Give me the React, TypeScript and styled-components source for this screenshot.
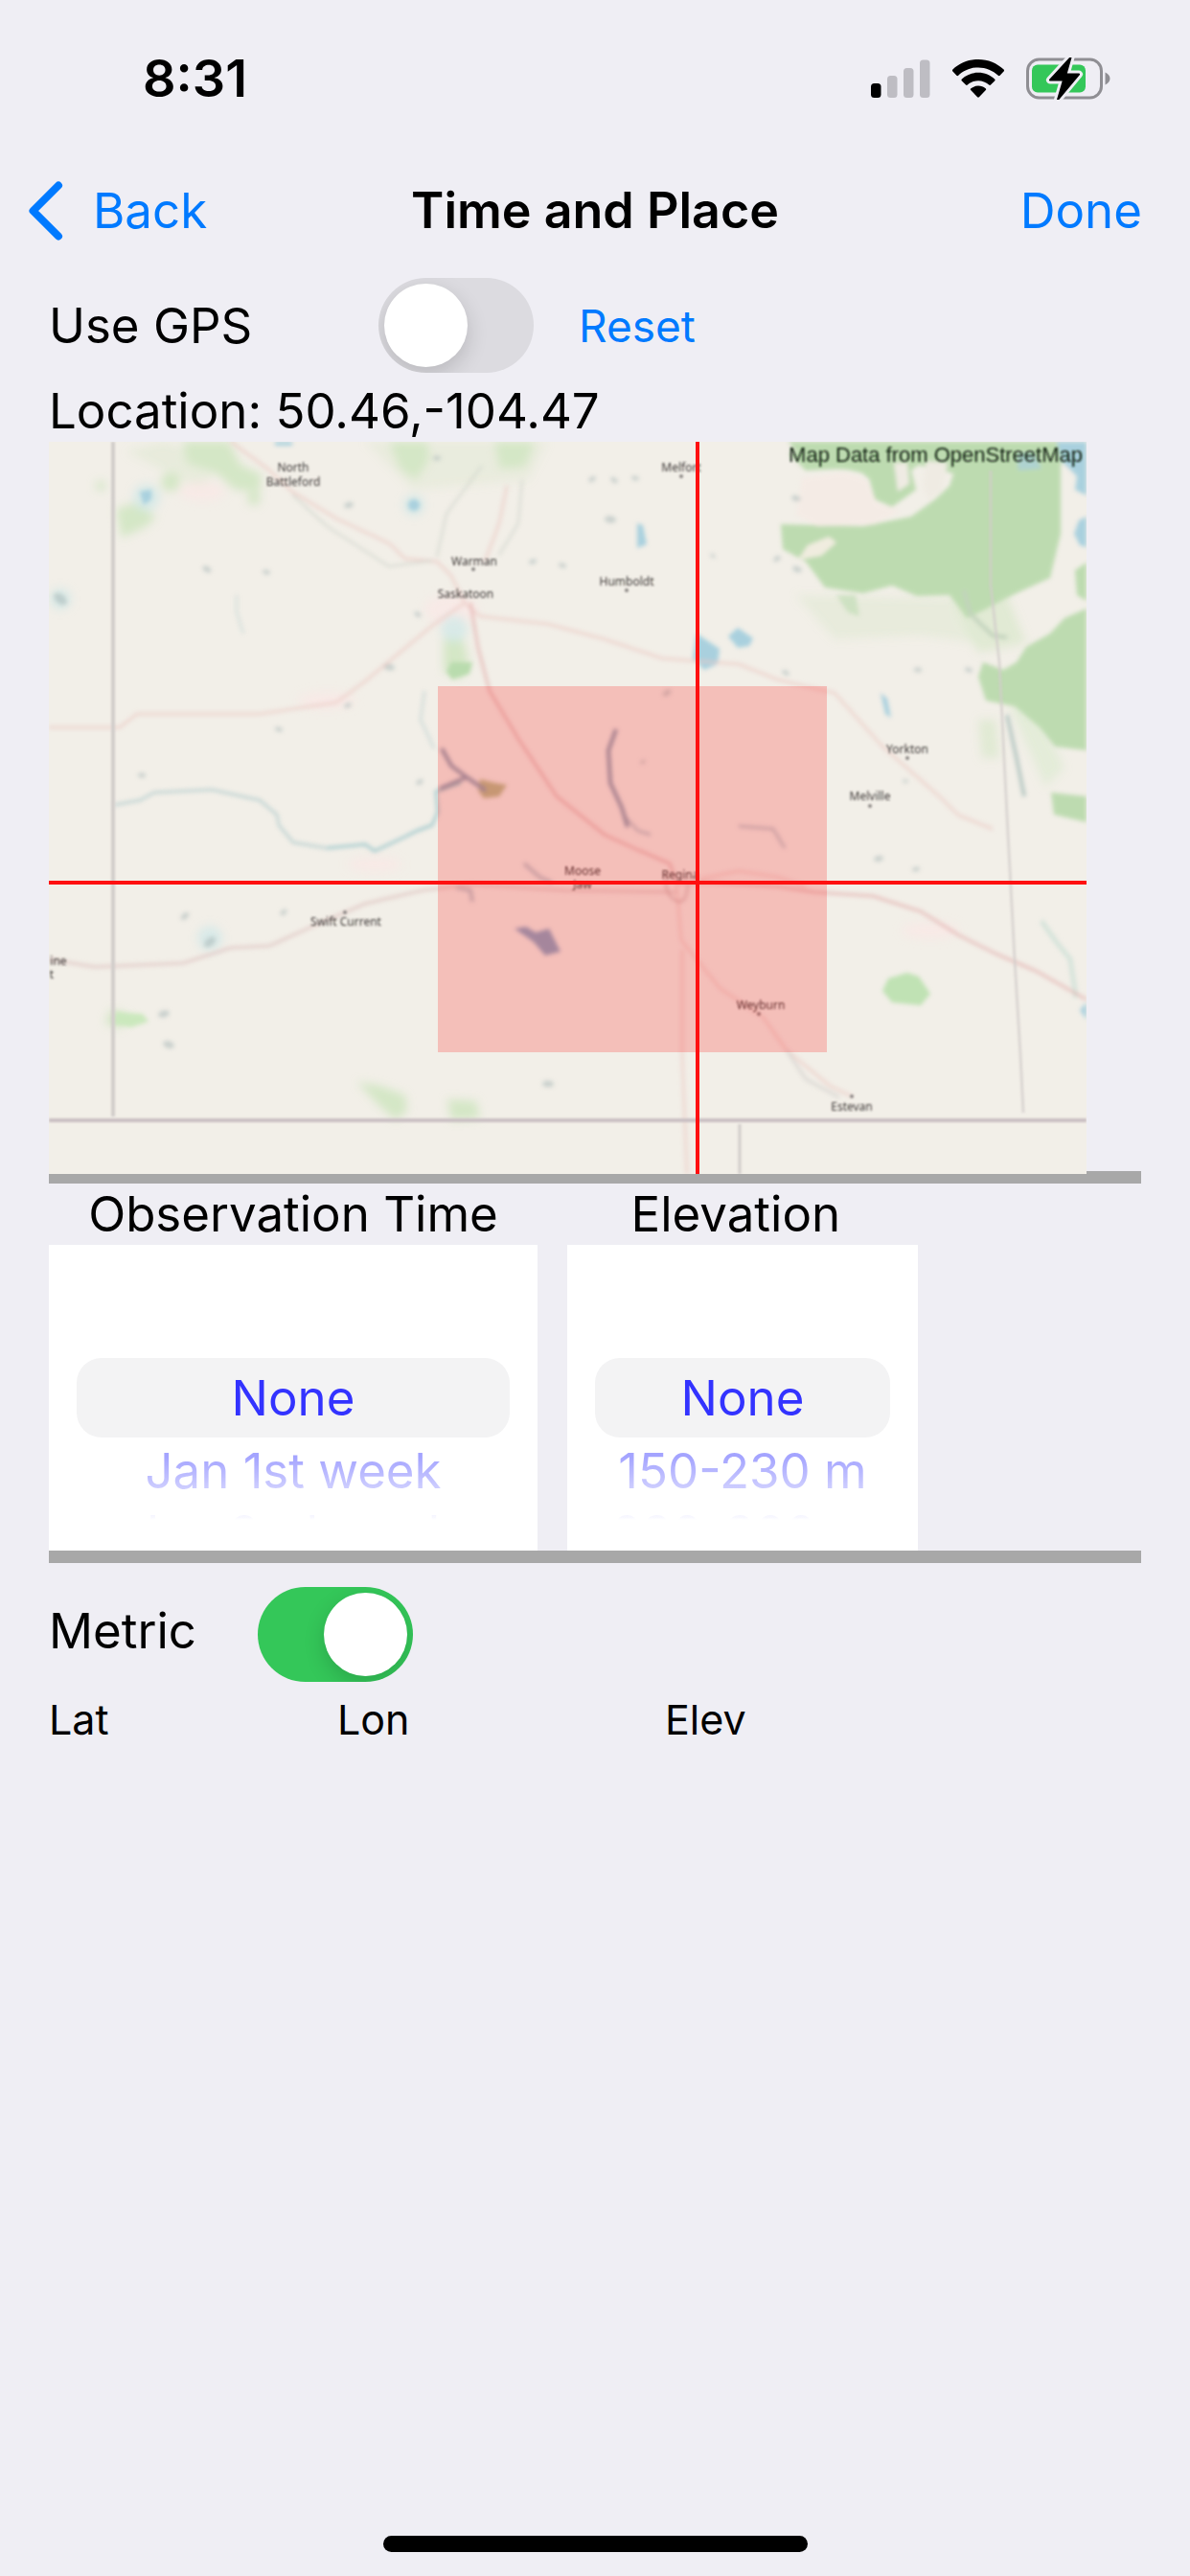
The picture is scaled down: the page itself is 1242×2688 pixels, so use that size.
import React, { useState } from "react";
import styled, { createGlobalStyle, css } from "styled-components";

const color = {
  page: "#efeef4",
  ink: "#000000",
  link: "#007aff",
  rule: "#a8a8a8",
  switchOff: "#dcdbe0",
  switchOn: "#34c759",
  wheel: "#3333ff",
  wheelBand: "#f3f3f4",
};

const GlobalStyle = createGlobalStyle`
  *, *::before, *::after { box-sizing: border-box; }
  body {
    margin: 0;
    background: ${color.page};
    color: ${color.ink};
    font-family: Inter, "Liberation Sans", sans-serif;
    font-size: 51px;
    line-height: 64px;
  }
  button, input { font: inherit; }
`;

const Screen = styled.div`
  display: flex;
  flex-direction: column;
  min-height: 100vh;
`;

const StatusBar = styled.header`
  display: flex;
  justify-content: space-between;
  align-items: center;
  height: 164px;
  padding: 0 83px 0 149px;
`;

const Clock = styled.time`
  font-size: 54px;
  font-weight: 600;
`;

const StatusIcons = styled.div`
  display: flex;
  align-items: center;
  gap: 23px;

  svg { display: block; }
`;

const NavBar = styled.nav`
  display: grid;
  grid-template-columns: 1fr auto 1fr;
  align-items: center;
  height: 112px;
  padding: 0 30px;
  column-gap: 10px;
`;

const Title = styled.h1`
  margin: 0;
  font-size: 52px;
  font-weight: 600;
  white-space: nowrap;
`;

const TextButton = styled.button<{ $small?: boolean }>`
  display: flex;
  align-items: center;
  padding: 0;
  border: 0;
  background: none;
  color: ${color.link};
  cursor: pointer;
  ${(p) => p.$small && css`font-size: 46px;`}
`;

const BackButton = styled(TextButton)`
  justify-self: start;
  gap: 31px;
`;

const DoneButton = styled(TextButton)`
  justify-self: end;
  padding-right: 20px;
`;

const Content = styled.main`
  display: flex;
  flex-direction: column;
  padding: 14px 51px 0;
`;

const GpsRow = styled.div`
  display: grid;
  grid-template-columns: 344px auto 1fr;
  align-items: center;
`;

const MetricRow = styled.div`
  display: grid;
  grid-template-columns: 218px auto;
  align-items: start;
  justify-content: start;
  margin-top: 25px;
  line-height: 92px;
`;

const ResetSlot = styled.div`
  padding-left: 47px;
`;

const Switch = styled.input`
  appearance: none;
  display: block;
  width: 162px;
  height: 99px;
  margin: 0;
  padding: 6px;
  border-radius: 50px;
  background: ${color.switchOff};
  overflow: hidden;
  cursor: pointer;

  &::before {
    content: "";
    display: block;
    width: 87px;
    height: 87px;
    border-radius: 50%;
    background: #ffffff;
    box-shadow: 0 8px 22px rgba(0, 0, 0, 0.16);
  }

  &:checked { background: ${color.switchOn}; }
  &:checked::before { margin-left: auto; }
`;

const Location = styled.p`
  margin: 8px 0 0;
`;

const MapFrame = styled.figure`
  position: relative;
  z-index: 1;
  width: 95%;
  margin: 0 0 -3px;

  svg {
    display: block;
    width: 100%;
    height: auto;
  }
`;

const Rule = styled.hr`
  width: 100%;
  height: 13px;
  margin: 0;
  border: 0;
  background: ${color.rule};
`;

const Pickers = styled.div`
  display: flex;
  gap: 31px;
`;

const PickerColumn = styled.section<{ $width: number }>`
  width: ${(p) => p.$width}px;
`;

const PickerHeading = styled.h2`
  margin: 0;
  font-size: inherit;
  font-weight: 400;
  text-align: center;
  white-space: pre;
`;

const Wheel = styled.fieldset`
  display: flex;
  flex-direction: column;
  height: 319px;
  min-width: 0;
  margin: 0;
  padding: 118px 29px 0;
  border: 0;
  background: #ffffff;
`;

const WheelRadio = styled.input`
  appearance: none;
  position: absolute;
  width: 0;
  height: 0;
  margin: 0;
`;

const WheelOption = styled.label<{ $distance: number }>`
  display: block;
  text-align: center;
  white-space: nowrap;
  cursor: pointer;
  ${(p) =>
    p.$distance === 0 &&
    css`
      border-radius: 26px;
      background: ${color.wheelBand};
      color: ${color.wheel};
      line-height: 83px;
    `}
  ${(p) =>
    p.$distance === 1 &&
    css`
      background: linear-gradient(#a4a4ff 20px, #cfcfff 54px);
      background-clip: text;
      color: transparent;
      line-height: 70px;
    `}
  ${(p) =>
    p.$distance === 2 &&
    css`
      padding-top: 4px;
      background: linear-gradient(#f3f3ff 11px, rgba(255, 255, 255, 0) 16px);
      background-clip: text;
      color: transparent;
      line-height: 52px;
    `}
`;

const Coordinates = styled.div`
  display: grid;
  grid-template-columns: 301px 342px 1fr;
  margin-top: 11px;
  font-size: 43px;
  line-height: 56px;
`;

const HomeIndicator = styled.div`
  width: 443px;
  height: 17px;
  margin: auto auto 25px;
  border-radius: 9px;
  background: ${color.ink};
`;

function SignalIcon() {
  return (
    <svg width="62" height="40" viewBox="0 0 62 40" aria-hidden="true">
      <rect x="0" y="25" width="10.5" height="15" rx="3.5" fill="#000" />
      <rect x="17" y="17" width="10.5" height="23" rx="3.5" fill="#bebdc3" />
      <rect x="34" y="9" width="10.5" height="31" rx="3.5" fill="#bebdc3" />
      <rect x="51" y="0.5" width="10.5" height="39.5" rx="3.5" fill="#bebdc3" />
    </svg>
  );
}

function WifiIcon() {
  return (
    <svg width="54" height="40" viewBox="0 0 54 40" aria-hidden="true">
      <path d="M27 0C37.3 0 46.7 4 53.6 10.6a1.3 1.3 0 0 1 0 1.9l-4 4.2a1.3 1.3 0 0 1-1.8 0C42.3 11.6 35 8.4 27 8.4S11.7 11.6 6.2 16.7a1.3 1.3 0 0 1-1.8 0l-4-4.2a1.3 1.3 0 0 1 0-1.9C7.3 4 16.7 0 27 0z" />
      <path d="M27 13.8c6.6 0 12.6 2.5 17.1 6.7a1.3 1.3 0 0 1 0 1.9l-4.100 4.200a1.300 1.300 0 0 1-1.800 0C35.200 23.900 31.300 22.300 27 22.300s-8.200 1.600-11.200 4.300a1.300 1.300 0 0 1-1.800 0l-4.100-4.200a1.300 1.300 0 0 1 0-1.900C14.400 16.300 20.400 13.800 27 13.800z" />
      <path d="M27 27.600c2.900 0 5.500 1 7.600 2.700a1.300 1.300 0 0 1 0 2l-6.700 7a1.300 1.300 0 0 1-1.800 0l-6.700-7a1.300 1.300 0 0 1 0-2c2.100-1.700 4.700-2.700 7.600-2.700z" />
    </svg>
  );
}

function BatteryIcon() {
  const bolt = "M46.500 0 25 23.500H39L33 44 55 17.500H41.500z";
  return (
    <svg width="88" height="44" viewBox="0 0 88 44" aria-hidden="true">
      <rect x="1.5" y="2" width="77" height="40" rx="12" fill="none" stroke="#8f8e93" strokeWidth="3" />
      <path d="M82.5 15.5c3 1.2 5 3.7 5 6.5s-2 5.3-5 6.5z" fill="#8f8e93" />
      <rect x="6" y="7.5" width="56" height="29" rx="6" fill="#34c759" />
      <path d={bolt} fill="#000" stroke={color.page} strokeWidth="8" strokeLinejoin="round" />
      <path d={bolt} fill="#000" stroke="#000" strokeWidth="2" strokeLinejoin="round" />
    </svg>
  );
}

function ChevronIcon() {
  return (
    <svg width="36" height="62" viewBox="0 0 36 62" fill="none" aria-hidden="true">
      <path d="M31 4.5 4.5 31 31 57.5" stroke={color.link} strokeWidth="8" strokeLinecap="round" strokeLinejoin="round" />
    </svg>
  );
}

const towns: { name: string; x: number; y: number; dot?: [number, number] }[] = [
  { name: "North", x: 255, y: 31 },
  { name: "Battleford", x: 255, y: 46 },
  { name: "Warman", x: 444, y: 129, dot: [443, 133] },
  { name: "Saskatoon", x: 435, y: 163 },
  { name: "Melfort", x: 660, y: 31, dot: [660, 36] },
  { name: "Humboldt", x: 603, y: 150, dot: [603, 155] },
  { name: "Yorkton", x: 896, y: 325, dot: [896, 330] },
  { name: "Melville", x: 857, y: 374, dot: [857, 380] },
  { name: "Swift Current", x: 310, y: 505, dot: [309, 491] },
  { name: "Moose", x: 557, y: 452 },
  { name: "Jaw", x: 557, y: 466 },
  { name: "Regina", x: 659, y: 456 },
  { name: "Weyburn", x: 743, y: 592, dot: [741, 597] },
  { name: "Estevan", x: 838, y: 698, dot: [838, 683] },
  { name: "ine", x: 10, y: 546 },
  { name: "t", x: 3, y: 560 },
];

const smallLakes = [
  [165, 133, 5], [227, 136, 4], [12, 164, 8], [355, 235, 6], [385, 180, 4],
  [240, 300, 4], [312, 275, 4], [387, 355, 4], [97, 348, 4], [142, 495, 5],
  [168, 522, 7], [120, 597, 6], [125, 629, 6], [313, 66, 5], [405, 17, 4],
  [505, 125, 4], [536, 129, 4], [567, 39, 4], [590, 40, 4], [612, 38, 4],
  [586, 81, 6], [781, 133, 5], [760, 122, 4], [780, 59, 5], [769, 241, 4],
  [907, 238, 4], [866, 435, 5], [905, 446, 4], [645, 262, 5], [620, 334, 3],
  [245, 491, 4], [521, 670, 6], [693, 119, 3], [960, 238, 4], [894, 354, 3],
];

function SaskatchewanMap() {
  return (
    <svg viewBox="0 0 1083 764" role="img" aria-label="Map of southern Saskatchewan centred near Regina">
      <defs>
        <filter id="soft" x="-5%" y="-5%" width="110%" height="110%">
          <feGaussianBlur stdDeviation="2" />
        </filter>
        <filter id="wash" x="-20%" y="-20%" width="140%" height="140%">
          <feGaussianBlur stdDeviation="5" />
        </filter>
        <filter id="print" x="-5%" y="-5%" width="110%" height="110%">
          <feGaussianBlur stdDeviation="1" />
        </filter>
      </defs>
      <rect width="1083" height="764" fill="#f2efe8" />

      <g filter="url(#wash)">
        <g fill="#cfe6c0" opacity="0.85">
          <path d="M140 0h48l12 24 22 10-2 18-26-2-20-18-30-10z" />
          <path d="M355 0h40l2 18-14 22-16-12z" />
          <path d="M465 0h42l-10 26-26 2z" />
          <path d="M70 70l20-6 22 14-10 10-26 12z" />
          <circle cx="127" cy="42" r="10" />
          <circle cx="214" cy="59" r="7" />
          <circle cx="54" cy="46" r="5" />
          <path d="M412 205l20 0 6 22-8 20-18-8z" />
          <path d="M322 668l24 4 26 10 2 16-12 10-20-18z" />
          <path d="M416 686l30 2 4 18-30 2z" />
          <path d="M66 592l18 8-10 12-16-6z" />
          <path d="M780 160l160 4 30 46-60-8-90 4z" opacity="0.35" />
          <path d="M940 160l30 60 50-10-20-50z" opacity="0.6" />
          <path d="M970 290l18 0 4 40-18 0z" opacity="0.6" />
          <path d="M1000 270l30 10 30 60-20 20z" opacity="0.45" />
          <path d="M80 10l40-10 60 20-20 30z" opacity="0.35" />
          <path d="M330 0l190 0-20 40-120 10z" opacity="0.3" />
        </g>
        <g fill="#f9e9e6" opacity="0.8">
          <ellipse cx="420" cy="175" rx="28" ry="16" />
          <ellipse cx="290" cy="270" rx="30" ry="9" />
          <ellipse cx="340" cy="441" rx="28" ry="8" />
          <ellipse cx="160" cy="52" rx="24" ry="10" />
          <ellipse cx="920" cy="510" rx="30" ry="9" />
        </g>
        <g fill="#d3e9e8" opacity="0.8">
          <circle cx="102" cy="58" r="14" />
          <circle cx="381" cy="66" r="11" />
          <circle cx="168" cy="518" r="13" />
          <circle cx="12" cy="164" r="11" />
          <circle cx="423" cy="195" r="14" />
        </g>
      </g>

      <g filter="url(#soft)">
        <g fill="#bddbb0">
          <path d="M772 12H1083V30L1056 22V96L1045 142 1010 158 990 168 975 176 958 184 948 170 940 160 906 161 880 150 850 158 810 152 790 125 766 112 764 86 800 87 850 88 900 78 925 60 940 46 948 22 920 14 900 30 905 50 880 68 862 60 855 34 830 28 790 30z" />
          <path d="M772 0H1056V34H948L890 20 862 44 846 30 790 26z" />
          <path d="M1083 174 1060 184 1045 200 1020 214 1010 230 996 238 975 230 970 245 978 270 1008 276 1034 298 1050 318 1083 322z" />
          <path d="M1071 134l12-8v40l-10-6z" />
          <path d="M1046 366l37 4v27l-34-8z" />
          <path d="M822 160l20 0 4 22-12-4z" opacity="0.6" />
        </g>
        <path d="M792 108l22-9 8 6-16 14-24 4z" fill="#f0ecdf" />
        <path d="M786 38l44-6 24 8 10 24 24 8-26 14-60 2-22-12z" fill="#f4ebe5" />
        <path d="M882 22l14 0 2 22-12 8zM916 20l22 2-6 30-14 8-6-14z" fill="#efebe3" />
        <path d="M876 560l20-6 12 4 12 18-10 12-30-3-10-12z" fill="#c0e2b4" />
        <path d="M70 595l28 2 6 8-18 6-20-4z" fill="#cbe8bd" />
        <path d="M420 230l22 0-3 12-18 6-6-8z" fill="#b9dcae" />

        <g fill="#a9d0de">
          <path d="M676 200l12 8 12 8-2 16-14 6-12-12z" />
          <path d="M709 203l10-9 16 11-4 8-12 2z" />
          <path d="M1052 0h31v56l-12-6 2-14-16-16z" />
          <path d="M1083 78l-8 4-5 14 6 12 7 2z" />
          <path d="M1010 12h18l8 16-24 2z" opacity="0.7" />
          <path d="M614 85l6 2 4 20-10 4z" />
          <path d="M868 262l7 6 4 20-6-4z" />
          <path d="M95 52l12-2 0 10-8 6z" />
          <circle cx="381" cy="66" r="6" />
          <path d="M236 0h18v4h-18z" />
          <path d="M1083 585l-7 8 7 10z" />
        </g>
        <path d="M486 508l12-2 10 6 14-4 12 24-16 4-12-14z" fill="#8fa8c4" />
        <path d="M450 352l16 4 12 2-8 12-16 2-6-8z" fill="#b9bd90" />

        <g fill="#a9b9b8" opacity="0.55">
          {smallLakes.map(([x, y, r]) => (
            <ellipse key={`${x}-${y}`} cx={x} cy={y} rx={r} ry={r * 0.6} transform={`rotate(${((x * 7) % 90) - 45} ${x} ${y})`} />
          ))}
        </g>

        <g fill="none" stroke="#b9d0d0" strokeWidth="3">
          <path d="M68 379L95 374 110 366 170 363 220 374 238 389 240 400 255 418 290 424" strokeOpacity="0.8" />
          <path d="M290 424L330 420 340 427 372 412 384 406 400 400 406 386 404 365 430 356" stroke="#a8cccf" />
          <path d="M402 320L388 290 392 260" strokeOpacity="0.5" />
          <path d="M196 160L196 178 203 200" strokeOpacity="0.4" />
        </g>
        <g fill="none" stroke="#8f9fb0" strokeWidth="4">
          <path d="M592 300L584 322 586 356 598 382 604 402" />
          <path d="M410 320L420 338 436 350 456 364M436 350L408 362" />
          <path d="M600 390L615 406 628 410M720 401L756 404 768 424" strokeWidth="3" opacity="0.5" />
          <path d="M496 440L512 454 525 460M425 465L440 468 442 480" opacity="0.5" />
        </g>
        <path d="M955 155L962 180 985 202 1000 204" fill="none" stroke="#c3d3bd" strokeWidth="4" />
        <path d="M1000 285L1010 330 1018 370" fill="none" stroke="#b9c9c4" strokeWidth="4" />
        <path d="M1036 500L1050 520 1066 540 1072 580" fill="none" stroke="#d5e3da" strokeWidth="5" />

        <g fill="none" stroke="#ecc9c3" strokeWidth="3" opacity="0.65">
          <path d="M190 0L228 28 254 52 300 80 355 106 372 122 405 125 420 140 434 168 450 182 520 190 580 206 640 226 720 232 760 248 820 262 870 318 925 366 950 390 985 404" />
          <path d="M0 298L74 298 92 284 220 284 300 272 330 250 400 192 434 168" />
          <path d="M440 168L448 215 460 260 490 310 530 370 580 410 615 426 648 440 655 460 690 460 760 464 800 470 860 474 910 490 950 515 990 535 1030 552 1083 582" stroke="#e2a9a8" />
          <path d="M0 540L48 548 140 544 190 528 230 526 270 508 330 482 390 468 440 462 540 468 655 470" stroke="#dcbdbb" />
          <path d="M655 460L660 520 700 570 745 600 770 635 815 672 838 683" />
          <path d="M478 46L470 85 455 125" />
          <path d="M770 635L790 665 825 684" stroke="#cfcdca" />
          <path d="M661 530L661 640 666 764" />
          <path d="M680 456L720 448 760 454 790 464" />
        </g>
        <g fill="none" stroke="#cfd3cb" strokeWidth="2" opacity="0.8">
          <path d="M254 55L290 88 355 130 400 124" />
          <path d="M452 25L415 75 405 120M494 40L490 85 470 118" />
          <path d="M645 450q-4 20 8 28t14-16" stroke="#c9a6a5" />
        </g>
      </g>

      <g fill="none" stroke="#d2cdcb" filter="url(#print)">
        <path d="M67 0V704" strokeWidth="4" />
        <path d="M983 30V150L992 230 1000 390 1008 540 1014 640 1017 700" strokeWidth="3" strokeOpacity="0.7" />
        <path d="M0 708H1083" strokeWidth="4" stroke="#cabfc3" />
        <path d="M721 712V764" strokeWidth="3" />
      </g>

      <g fontFamily="'Noto Sans', sans-serif" fontSize="12" fill="#3f3a39" textAnchor="middle" filter="url(#print)">
        {towns.map((t) => (
          <React.Fragment key={t.name}>
            <text x={t.x} y={t.y}>{t.name}</text>
            {t.dot && <circle cx={t.dot[0]} cy={t.dot[1]} r="2" fill="#8d8886" />}
          </React.Fragment>
        ))}
      </g>
      <text x="1079" y="21" textAnchor="end" fontFamily="'Liberation Sans', sans-serif" fontSize="22" fill="#10200f" filter="url(#print)">
        Map Data from OpenStreetMap
      </text>

      <rect x="406" y="255" width="406" height="382" fill="#ff0000" fillOpacity="0.2" />
      <path d="M0 460H1083M677 0V764" stroke="#ff1010" strokeWidth="4" />
    </svg>
  );
}

function WheelPicker({ name, legend, width, options }: { name: string; legend: string; width: number; options: string[] }) {
  const [selected, setSelected] = useState(0);
  return (
    <PickerColumn $width={width}>
      <PickerHeading id={`${name}-heading`}>{legend}</PickerHeading>
      <Wheel aria-labelledby={`${name}-heading`}>
        {options.slice(selected, selected + 3).map((option, distance) => (
          <WheelOption key={option} $distance={distance}>
            <WheelRadio
              type="radio"
              name={name}
              checked={distance === 0}
              onChange={() => setSelected(selected + distance)}
            />
            {option}
          </WheelOption>
        ))}
      </Wheel>
    </PickerColumn>
  );
}

export default function App() {
  const [useGps, setUseGps] = useState(false);
  const [metric, setMetric] = useState(true);

  return (
    <Screen>
      <GlobalStyle />
      <StatusBar>
        <Clock>8:31</Clock>
        <StatusIcons>
          <SignalIcon />
          <WifiIcon />
          <BatteryIcon />
        </StatusIcons>
      </StatusBar>
      <NavBar>
        <BackButton type="button">
          <ChevronIcon />
          Back
        </BackButton>
        <Title>Time and Place</Title>
        <DoneButton type="button">Done</DoneButton>
      </NavBar>
      <Content>
        <GpsRow>
          <label htmlFor="gps">Use GPS</label>
          <Switch id="gps" type="checkbox" role="switch" checked={useGps} onChange={(e) => setUseGps(e.target.checked)} />
          <ResetSlot>
            <TextButton type="button" $small onClick={() => setUseGps(false)}>Reset</TextButton>
          </ResetSlot>
        </GpsRow>
        <Location>Location: 50.46,-104.47</Location>
        <MapFrame>
          <SaskatchewanMap />
        </MapFrame>
        <Rule />
        <Pickers>
          <WheelPicker name="time" legend="Observation Time" width={510} options={["None", "Jan 1st week", "Jan 2nd week"]} />
          <WheelPicker name="elevation" legend="Elevation " width={366} options={["None", "150-230 m", "230-300 m"]} />
        </Pickers>
        <Rule />
        <MetricRow>
          <label htmlFor="metric">Metric</label>
          <Switch id="metric" type="checkbox" role="switch" checked={metric} onChange={(e) => setMetric(e.target.checked)} />
        </MetricRow>
        <Coordinates>
          <span>Lat</span>
          <span>Lon</span>
          <span>Elev</span>
        </Coordinates>
      </Content>
      <HomeIndicator />
    </Screen>
  );
}
